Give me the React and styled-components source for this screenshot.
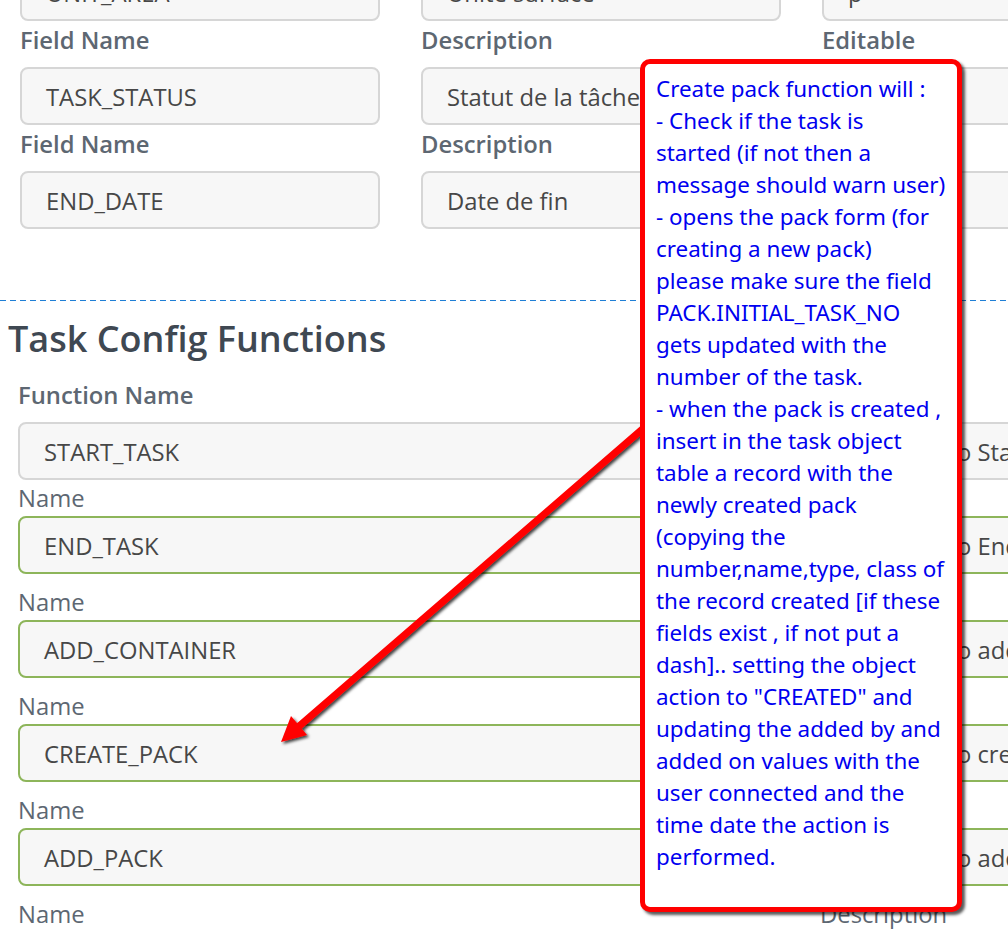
import React from "react";
import styled, { createGlobalStyle } from "styled-components";

const GlobalStyle = createGlobalStyle`
  html, body {
    margin: 0;
    padding: 0;
    background: #ffffff;
    overflow: hidden;
  }
  body {
    font-family: "Open Sans", "Liberation Sans", sans-serif;
  }
`;

const topRows = [
  ["UNIT_AREA", "Unité surface", "p"],
  ["TASK_STATUS", "Statut de la tâche", "oui"],
  ["END_DATE", "Date de fin", "oui"],
];
const topLabels = ["Field Name", "Description", "Editable"];

const functions = [
  { name: "START_TASK", desc: "Function to Start task" },
  { name: "END_TASK", desc: "Function to End task" },
  { name: "ADD_CONTAINER", desc: "Function to add container" },
  { name: "CREATE_PACK", desc: "Function to create pack" },
  { name: "ADD_PACK", desc: "Function to add pack" },
  { name: "ADD_OBJECT", desc: "Function to add object" },
];

const noteLines = [
  "Create pack function will :",
  "- Check if the task is",
  "started (if not then a",
  "message should warn user)",
  "- opens the pack form (for",
  "creating a new pack)",
  "please make sure the field",
  "PACK.INITIAL_TASK_NO",
  "gets updated with the",
  "number of the task.",
  "- when the pack is created ,",
  "insert in the task object",
  "table a record with the",
  "newly created pack",
  "(copying the",
  "number,name,type, class of",
  "the record created [if these",
  "fields exist , if not put a",
  "dash].. setting the object",
  'action to "CREATED" and',
  "updating the added by and",
  "added on values with the",
  "user connected and the",
  "time date the action is",
  "performed.",
];

export default function App() {
  return (
    <>
      <GlobalStyle />
      <Page>
        <FieldsGrid>
          {topRows.map((row, r) =>
            row.map((value, c) => (
              <Field key={`${r}-${c}`}>
                <Label $bold $before={4} $after={12}>
                  {topLabels[c]}
                </Label>
                <InputBox>{value}</InputBox>
              </Field>
            ))
          )}
        </FieldsGrid>

        <Divider />
        <Heading>Task Config Functions</Heading>

        <FunctionList>
          {functions.map((fn, i) => {
            const first = i === 0;
            const before = first ? 19 : i === 1 ? 3 : 13;
            const after = first ? 12 : 3;
            return (
              <FunctionRow key={fn.name}>
                <Field>
                  <Label $bold={first} $before={before} $after={after}>
                    {first ? "Function Name" : "Name"}
                  </Label>
                  <InputBox $valid={!first}>{fn.name}</InputBox>
                </Field>
                <Field>
                  <Label $bold={first} $before={before} $after={after}>
                    Description
                  </Label>
                  <InputBox $valid={!first}>{fn.desc}</InputBox>
                </Field>
              </FunctionRow>
            );
          })}
        </FunctionList>

        <Arrow viewBox="0 0 1008 932" width="1008" height="932">
          <defs>
            <filter id="arrowShadow" x="-10%" y="-10%" width="130%" height="130%">
              <feDropShadow dx="2" dy="2" stdDeviation="1.6" floodColor="#000" floodOpacity="0.75" />
            </filter>
          </defs>
          <g filter="url(#arrowShadow)">
            <line x1="646" y1="426" x2="297" y2="728" stroke="#ff0000" strokeWidth="7" strokeLinecap="round" />
            <polygon points="281,742 291,716 307,735" fill="#ff0000" />
          </g>
        </Arrow>

        <Note>
          {noteLines.map((line, i) => (
            <NoteLine key={i}>{line}</NoteLine>
          ))}
        </Note>
      </Page>
    </>
  );
}

const Page = styled.div`
  position: relative;
  width: 1600px;
  height: 932px;
  overflow: hidden;
`;

const FieldsGrid = styled.div`
  display: grid;
  grid-template-columns: repeat(3, 360px);
  column-gap: 41px;
  padding-left: 20px;
  margin-top: -83px;
`;

const Field = styled.div`
  display: flex;
  flex-direction: column;
`;

const Label = styled.div`
  margin: ${(p) => p.$before}px 0 ${(p) => p.$after}px;
  height: 30px;
  line-height: 30px;
  font-size: 23.8px;
  font-weight: ${(p) => (p.$bold ? 600 : 400)};
  color: #5d6772;
  white-space: nowrap;
`;

const InputBox = styled.div`
  box-sizing: border-box;
  height: 58px;
  display: flex;
  align-items: center;
  padding: 2px 0 0 24px;
  background: #f7f7f7;
  border: 2px solid ${(p) => (p.$valid ? "#8db55a" : "#d6d6d6")};
  border-radius: 8px;
  font-size: 23.8px;
  color: #474747;
  white-space: nowrap;
  overflow: hidden;
`;

const Divider = styled.div`
  margin-top: 71px;
  height: 1px;
  background: repeating-linear-gradient(
    to right,
    #1f7fd6 0 6px,
    transparent 6px 10px
  );
`;

const Heading = styled.h2`
  margin: 16px 0 0;
  padding-left: 8px;
  height: 44px;
  line-height: 44px;
  font-size: 36px;
  font-weight: 600;
  color: #3f4852;
`;

const FunctionList = styled.div`
  padding-left: 18px;
`;

const FunctionRow = styled.div`
  display: grid;
  grid-template-columns: 762px 762px;
  column-gap: 40px;
`;

const Arrow = styled.svg`
  position: absolute;
  left: 0;
  top: 0;
  pointer-events: none;
  z-index: 1;
`;

const Note = styled.div`
  position: absolute;
  left: 640px;
  top: 59px;
  z-index: 2;
  box-sizing: border-box;
  width: 322px;
  height: 853px;
  padding: 9px 0 0 11px;
  background: #ffffff;
  border: 5px solid #ff0000;
  border-radius: 10px;
  box-shadow: 3px 3px 3px rgba(0, 0, 0, 0.65);
  font-family: "Noto Sans", "Open Sans", sans-serif;
  font-size: 22.4px;
  color: #0000f0;
`;

const NoteLine = styled.div`
  height: 32px;
  line-height: 32px;
  white-space: nowrap;
`;
